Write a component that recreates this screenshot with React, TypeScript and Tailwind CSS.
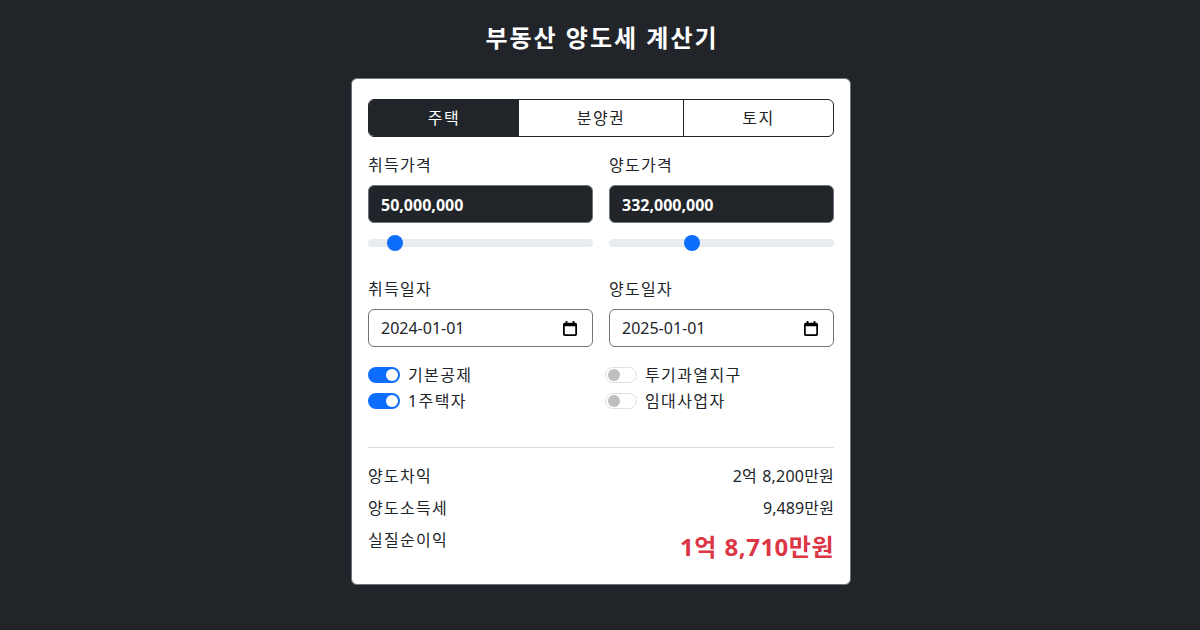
const fontStack = "font-['Noto_Sans','Noto_Sans_CJK_KR',sans-serif]";

const Slider = ({ left }: { left: number }) => (
  <div className="relative mt-4 h-2 rounded-full bg-[#e9ecef]">
    <div
      className="absolute top-[-4px] h-4 w-4 rounded-full bg-[#0d6efd]"
      style={{ left }}
    />
  </div>
);

const MoneyField = ({ label, value, thumb }: { label: string; value: string; thumb: number }) => (
  <div>
    <label className="mb-2 block text-base leading-6 tracking-[1.3px] text-[#212529]">{label}</label>
    <input
      readOnly
      value={value}
      className="block h-[38px] w-full rounded-md border border-[#6c757d] bg-[#212529] px-3 pt-px text-base font-bold text-white outline-none"
    />
    <Slider left={thumb} />
  </div>
);

const DateField = ({ label, value }: { label: string; value: string }) => (
  <div>
    <label className="mb-2 block text-base leading-6 tracking-[1.3px] text-[#212529]">{label}</label>
    <div className="flex h-[38px] items-center justify-between rounded-md border border-[#6c757d] bg-white pr-[15px] pl-3 text-base text-[#212529]">
      <span>{value}</span>
      <svg width="14" height="15" viewBox="0 0 16 17" fill="#000">
        <path d="M14 2h-1V0h-2v2H5V0H3v2H2C.9 2 0 2.9 0 4v11c0 1.1.9 2 2 2h12c1.1 0 2-.9 2-2V4c0-1.1-.9-2-2-2zm0 13H2V6h12v9z" />
      </svg>
    </div>
  </div>
);

const Toggle = ({ label, on }: { label: string; on: boolean }) => (
  <div className="flex h-[26px] items-center gap-2 text-base tracking-[1.4px] text-[#212529]">
    {on ? (
      <span className="flex h-4 w-8 items-center justify-end rounded-full bg-[#0d6efd] px-[2px]">
        <span className="h-3 w-3 rounded-full bg-white" />
      </span>
    ) : (
      <span className="flex h-4 w-8 items-center rounded-full border border-[#dee2e6] bg-white px-[2px]">
        <span className="h-3 w-3 rounded-full bg-[#bfbfbf]" />
      </span>
    )}
    <span>{label}</span>
  </div>
);

export default function App() {
  return (
    <div className={`h-[630px] w-[1200px] overflow-hidden bg-[#212529] ${fontStack}`}>
      <h1 className="ml-1 pt-[20px] text-center text-2xl leading-9 font-bold tracking-[2px] text-white">부동산 양도세 계산기</h1>
      <div className="mt-[22px] ml-[351px] h-[507px] w-[500px] rounded-md border border-[#6c757d] bg-white px-4 pt-5">
        <div className="flex h-[38px] overflow-hidden rounded-md border border-[#212529] text-base tracking-[1.5px] text-[#212529]">
          <div className="flex w-[150px] items-center justify-center bg-[#212529] text-white">주택</div>
          <div className="flex w-[165px] items-center justify-center border-r border-[#212529]">분양권</div>
          <div className="flex flex-1 items-center justify-center">토지</div>
        </div>

        <div className="mt-4 grid grid-cols-2 gap-x-4">
          <MoneyField label="취득가격" value="50,000,000" thumb={19} />
          <MoneyField label="양도가격" value="332,000,000" thumb={75} />
        </div>

        <div className="mt-[30px] grid grid-cols-2 gap-x-4">
          <DateField label="취득일자" value="2024-01-01" />
          <DateField label="양도일자" value="2025-01-01" />
        </div>

        <div className="mt-[15px] grid grid-cols-2 gap-x-4">
          <div>
            <Toggle label="기본공제" on />
            <Toggle label="1주택자" on />
          </div>
          <div className="-ml-1">
            <Toggle label="투기과열지구" on={false} />
            <Toggle label="임대사업자" on={false} />
          </div>
        </div>

        <hr className="mt-[33px] border-[#dcdcdc]" />

        <div className="mt-4 text-base leading-6 text-[#212529]">
          <div className="flex justify-between">
            <span className="tracking-[1.3px]">양도차익</span>
            <span className="tracking-[0.2px] [word-spacing:1px]">2억 8,200만원</span>
          </div>
          <div className="mt-2 flex justify-between">
            <span className="tracking-[1.3px]">양도소득세</span>
            <span className="tracking-[0.1px]">9,489만원</span>
          </div>
          <div className="mt-2 flex items-start justify-between">
            <span className="tracking-[1.3px]">실질순이익</span>
            <span className="pt-px text-2xl leading-9 font-bold tracking-[0.5px] text-[#dc3545] [word-spacing:1px]">1억 8,710만원</span>
          </div>
        </div>
      </div>
    </div>
  );
}
